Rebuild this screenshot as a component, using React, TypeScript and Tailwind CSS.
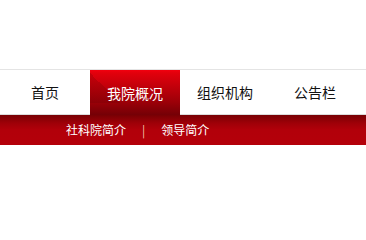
const navItems = ['首页', '我院概况', '组织机构', '公告栏'];
const subItems = ['社科院简介', '领导简介'];

export default function App() {
  return (
    <div className="h-[218px] w-full bg-white font-['Noto_Sans_CJK_SC','Microsoft_YaHei',sans-serif]">
      <div className="h-[69px]" />
      <nav className="border-t border-[#e4e4e4]">
        <ul className="flex h-[45px] border-b border-[#dcdcdc]">
          {navItems.map((item, i) =>
            i === 1 ? (
              <li
                key={item}
                className="relative -mb-px flex h-[45px] w-[90px] items-center justify-center overflow-hidden bg-[linear-gradient(180deg,#f2000f_0px,#e2000c_3px,#c8000b_14px,#9c0008_32px,#740006_45px)] text-[14px] text-white"
              >
                <span className="absolute left-0 top-[3px] h-[30px] w-[30px] bg-[linear-gradient(225deg,transparent_50%,rgba(80,0,0,0.18)_50%)]" />
                <span className="relative leading-none">{item}</span>
              </li>
            ) : (
              <li key={item} className="flex w-[90px] items-center justify-center text-[14px] leading-none text-[#111]">
                {item}
              </li>
            )
          )}
        </ul>
      </nav>
      <div className="flex h-[30px] items-center bg-[linear-gradient(180deg,#780004_0px,#9e0008_8px,#b2000a_15px,#b4000a_30px)] pl-[66px] text-[12px] leading-none text-white">
        {subItems.map((item, i) => (
          <div key={item} className="flex items-center">
            {i > 0 && <span className="px-[16px] text-[#f0c8a8]">|</span>}
            <span>{item}</span>
          </div>
        ))}
      </div>
    </div>
  );
}
